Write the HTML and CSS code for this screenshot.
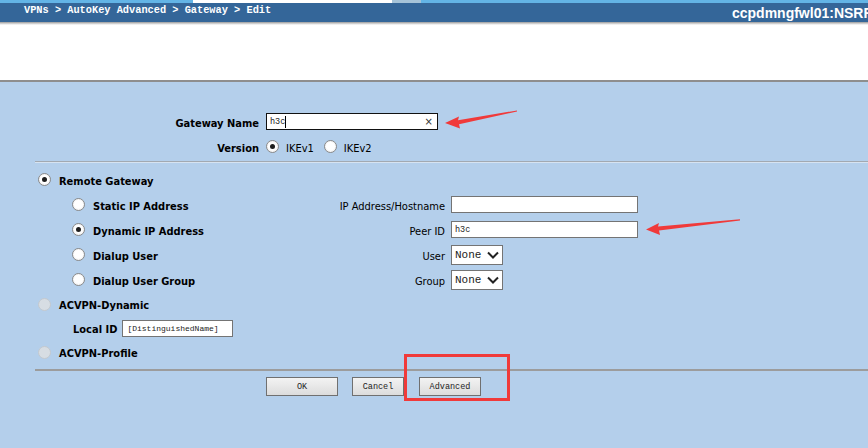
FILE: index.html
```html
<!DOCTYPE html>
<html>
<head>
<meta charset="utf-8">
<link rel="stylesheet" href="styles.css">
</head>
<body>
<div class="topstrip"><span class="ts ts-a"></span><span class="ts ts-b"></span><span class="ts ts-c"></span><span class="ts ts-d"></span></div>
<header class="bar">
  <div class="crumbs">VPNs &gt; AutoKey Advanced &gt; Gateway &gt; Edit</div>
  <div class="host">ccpdmngfwl01:NSRF</div>
</header>
<div class="banner"></div>
<main class="content">
  <div class="topform">
    <label class="blabel">Gateway Name</label>
    <div class="ctl"><div class="input name-input"><span class="val">h3c</span><span class="caret"></span><span class="clear">×</span></div></div>
    <label class="blabel">Version</label>
    <div class="ctl radios">
      <span class="radio checked"></span><span class="rtext">IKEv1</span>
      <span class="radio"></span><span class="rtext">IKEv2</span>
    </div>
  </div>
  <div class="rule light"></div>
  <div class="opt top"><span class="radio checked"></span><span class="blabel">Remote Gateway</span></div>
  <div class="remote">
    <div class="opt"><span class="radio"></span><span class="blabel">Static IP Address</span></div>
    <div class="rlabel">IP Address/Hostname</div>
    <div class="ctl"><div class="input wide"></div></div>

    <div class="opt"><span class="radio checked"></span><span class="blabel">Dynamic IP Address</span></div>
    <div class="rlabel">Peer ID</div>
    <div class="ctl"><div class="input wide"><span class="val">h3c</span></div></div>

    <div class="opt"><span class="radio"></span><span class="blabel">Dialup User</span></div>
    <div class="rlabel">User</div>
    <div class="ctl"><div class="select"><span class="sval">None</span><svg class="chev" width="12" height="8" viewBox="0 0 12 8"><polyline points="1,1.5 6,6.5 11,1.5" fill="none" stroke="#222" stroke-width="2"/></svg></div></div>

    <div class="opt"><span class="radio"></span><span class="blabel">Dialup User Group</span></div>
    <div class="rlabel">Group</div>
    <div class="ctl"><div class="select"><span class="sval">None</span><svg class="chev" width="12" height="8" viewBox="0 0 12 8"><polyline points="1,1.5 6,6.5 11,1.5" fill="none" stroke="#222" stroke-width="2"/></svg></div></div>
  </div>
  <div class="opt top slim"><span class="radio disabled"></span><span class="blabel">ACVPN-Dynamic</span></div>
  <div class="localid"><span class="blabel">Local ID</span><div class="input small"><span class="val">[DistinguishedName]</span></div></div>
  <div class="opt top slim"><span class="radio disabled"></span><span class="blabel">ACVPN-Profile</span></div>
  <div class="rule dark"></div>
  <div class="buttons">
    <button class="btn b-ok">OK</button>
    <button class="btn b-cancel">Cancel</button>
    <button class="btn b-adv">Advanced</button>
  </div>
</main>
<div class="annot-box"></div>
<svg class="annot" width="868" height="448" viewBox="0 0 868 448">
  <polygon points="445,123 459,116.5 458,120.2 517,110.4 517,111.6 459,124.2 460,128.5" fill="#f03a3a"/>
  <polygon points="646,229.5 659,223 658,226.6 740,219.2 740,220.4 659,230.4 660,235" fill="#f03a3a"/>
</svg>
</body>
</html>
```

FILE: styles.css
```css
html, body {
  margin: 0;
  padding: 0;
}
body {
  width: 868px;
  height: 448px;
  overflow: hidden;
  background: #b4cfeb;
  font-family: "DejaVu Sans Condensed", "DejaVu Sans", sans-serif;
  font-size: 11px;
  color: #000;
  position: relative;
}
.topstrip {
  display: flex;
  height: 3px;
}
.ts { display: block; height: 3px; }
.ts-a { width: 193px; background: #63b4e6; }
.ts-b { width: 199px; background: #ffffff; }
.ts-c { width: 29px; background: #a6c3d8; }
.ts-d { flex: 1; background: #63b4e6; }

.bar {
  height: 19px;
  background: #346699;
  display: flex;
  justify-content: space-between;
  align-items: flex-start;
  overflow: hidden;
  color: #fff;
  font-weight: bold;
}
.crumbs {
  padding-left: 24px;
  padding-top: 1px;
  font-family: "Liberation Mono", monospace;
  font-size: 10.3px;
  line-height: 13px;
  white-space: nowrap;
}
.host {
  font-family: "Liberation Sans", Arial, sans-serif;
  font-size: 14px;
  line-height: 16px;
  padding-top: 2px;
  margin-right: -4px;
  white-space: nowrap;
}
.banner {
  height: 58px;
  background: linear-gradient(#9a9a9a, #e0e0e0 2px, #ffffff 3px, #ffffff);
  border-bottom: 2px solid #8e8e8e;
}

.content {
  padding-left: 35px;
}
.blabel, .rlabel, .rtext {
  white-space: nowrap;
  padding-top: 3px;
}
.blabel {
  font-weight: bold;
}
.topform {
  display: grid;
  grid-template-columns: 224px 1fr;
  column-gap: 7px;
  grid-auto-rows: 25px;
  padding-top: 27px;
  align-items: center;
}
.topform .blabel { text-align: right; }
.ctl { display: flex; align-items: center; }
.rtext { margin-left: 7px; margin-right: 10px; }

.input {
  box-sizing: border-box;
  height: 17px;
  background: #fff;
  border: 1px solid #747474;
  display: flex;
  align-items: center;
  font-family: "Liberation Mono", monospace;
  font-size: 8.5px;
  color: #222;
  padding-left: 3px;
}
.name-input {
  width: 172px;
  border-color: #111;
}
.caret {
  width: 1px;
  height: 12px;
  background: #000;
}
.clear {
  margin-left: auto;
  margin-right: 4px;
  font-family: "DejaVu Sans", sans-serif;
  font-size: 10px;
  color: #333;
}
.wide { width: 187px; }
.small { width: 111px; padding-left: 4px; font-size: 8px; }

.rule.light {
  margin-top: 2px;
  height: 0;
  border-top: 1px solid #a2a9b1;
  border-bottom: 1px solid #d6e3f1;
}
.rule.dark {
  margin-top: 5px;
  height: 2px;
  background: #9c9c9c;
}

.opt {
  display: flex;
  align-items: center;
  gap: 8px;
  height: 25px;
}
.opt.top {
  padding-left: 3px;
  margin-top: 4px;
}
.opt.slim {
  height: 24px;
  margin-top: 0;
}
.remote {
  display: grid;
  grid-template-columns: 254px 113px 1fr;
  column-gap: 6px;
  grid-auto-rows: 25px;
  align-items: center;
  padding-left: 37px;
}
.rlabel {
  text-align: right;
}
.localid {
  display: flex;
  align-items: center;
  gap: 5px;
  height: 24px;
  padding-left: 38px;
}

.radio {
  box-sizing: border-box;
  width: 13px;
  height: 13px;
  border-radius: 50%;
  border: 1px solid #8a8a8a;
  background: radial-gradient(circle at 50% 40%, #ffffff 55%, #e4e4e4 100%);
  display: inline-flex;
  align-items: center;
  justify-content: center;
  flex: none;
  box-shadow: inset 0 0 0 1px #f5f5f5;
}
.radio.checked::after {
  content: "";
  width: 5px;
  height: 5px;
  border-radius: 50%;
  background: #1e1e1e;
}
.radio.disabled {
  border-color: #c3c9cf;
  background: #d7dde3;
  box-shadow: none;
}

.select {
  box-sizing: border-box;
  width: 52px;
  height: 20px;
  background: #fff;
  border: 1px solid #747474;
  display: flex;
  align-items: center;
  padding-left: 3px;
  padding-right: 3px;
  font-family: "Liberation Mono", monospace;
  font-size: 11px;
  color: #222;
}
.chev { margin-left: auto; }

.buttons {
  display: flex;
  padding-left: 231px;
  margin-top: 6px;
}
.btn {
  box-sizing: border-box;
  height: 19px;
  border: 1px solid #707070;
  border-radius: 0;
  background: linear-gradient(#f3f3f3, #dcdcdc);
  font-family: "Liberation Mono", monospace;
  font-size: 8.5px;
  color: #222;
  padding: 0;
}
.b-ok { width: 72px; }
.b-cancel { width: 52px; margin-left: 14px; }
.b-adv { width: 62px; margin-left: 15px; }

.annot-box {
  position: absolute;
  left: 404px;
  top: 354px;
  width: 106px;
  height: 47px;
  box-sizing: border-box;
  border: 3px solid #f03a3a;
}
.annot {
  position: absolute;
  left: 0;
  top: 0;
  pointer-events: none;
}
```
